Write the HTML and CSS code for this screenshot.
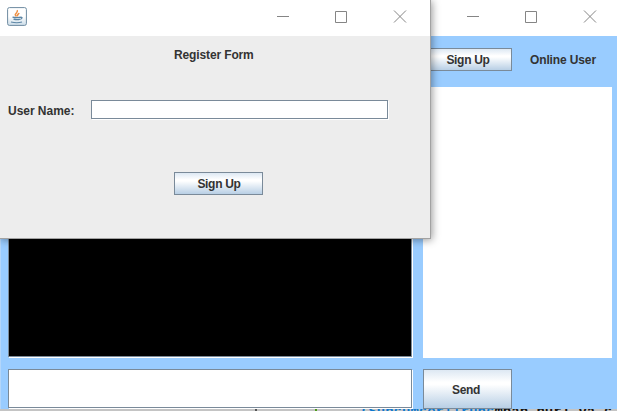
FILE: index.html
```html
<!DOCTYPE html>
<html lang="en">
<head>
<meta charset="utf-8">
<title>Register Form</title>
<link rel="stylesheet" href="styles.css">
</head>
<body>
<main class="desktop">
  <section class="chat">
    <header class="titlebar">
      <svg class="controls" width="132" height="14" viewBox="0 0 132 14"><path d="M0 7.500h12M58.500 2.500h11v11h-11zM117 1.500l12 12M129 1.500l-12 12"/></svg>
    </header>
    <div class="chat-body">
      <div class="log"></div>
      <aside class="online">
        <div class="online-head"><button class="btn signup">Sign Up</button><span class="online-label">Online User</span></div>
        <div class="users"></div>
      </aside>
      <div class="field message"></div>
      <button class="btn send">Send</button>
    </div>
  </section>
  <footer class="editor"><span class="mark dark"></span><span class="mark green"></span><span class="code blue">(Sunsumser!!runs</span><span class="code">mnan nurl va s</span></footer>

  <section class="dialog">
    <header class="titlebar">
      <svg class="java" width="20" height="19" viewBox="0 0 20 19">
        <defs><linearGradient id="tile" x2="0" y2="1"><stop stop-color="#fff"/><stop offset=".5" stop-color="#fff"/><stop offset="1" stop-color="#cbdce8"/></linearGradient></defs>
        <rect x=".6" y=".6" width="18.800" height="17.800" rx="1.800" fill="url(#tile)" stroke="#6e8ba1"/>
        <path d="M9.500 9.300C5.800 6.900 11.600 6 10.200 3.200M10.600 9.300C9.600 7.700 11.700 7.200 12 6" fill="none" stroke="#ef9145" stroke-width="1.500"/>
        <path d="M5.500 10.200q4.500 1 8.500 0M6.500 12.200q3.500 1 6.500 0M4 15q6 1.500 11 0M14 10.200q2.500.3-.6 2.200" fill="none" stroke="#5d86a5" stroke-width="1.200"/>
      </svg>
      <svg class="controls" width="132" height="14" viewBox="0 0 132 14"><path d="M0 7.500h12M58.500 2.500h11v11h-11zM117 1.500l12 12M129 1.500l-12 12"/></svg>
    </header>
    <div class="form">
      <h1 class="heading">Register Form</h1>
      <div class="row"><label class="label">User Name:</label><div class="field name"></div></div>
      <button class="btn submit">Sign Up</button>
    </div>
  </section>
</main>
</body>
</html>
```
FILE: styles.css
```css
* { box-sizing: border-box; }
body {
  margin: 0;
  font: bold 12px/14px "Liberation Sans", Arial, sans-serif;
  letter-spacing: -0.13px;
  color: #333;
}
.desktop { position: relative; width: 617px; height: 411px; overflow: hidden; }
.chat { height: 409px; background: #9cf; }
.titlebar {
  display: flex;
  align-items: flex-start;
  justify-content: flex-end;
  height: 36px;
  padding-top: 9px;
  background: #fff;
}
.chat .titlebar { padding-right: 18px; }
.controls path { fill: none; stroke: #858585; stroke-width: 1; }
.chat-body {
  display: grid;
  grid-template-columns: 405px 189px;
  grid-template-rows: 310px 40px;
  column-gap: 10px;
  row-gap: 11px;
  padding: 12px 5px 0 7px;
  border-left: 1px solid #b3d6fa;
}
.log {
  margin: 0 1px 1px 0;
  background: #000;
  border: 1px solid #7a8a99;
  box-shadow: 1px 1px #fff;
}
.online { display: flex; flex-direction: column; }
.online-head { display: flex; align-items: flex-start; height: 39px; }
.users { flex: 1; background: #fff; }
.btn {
  display: block;
  margin: 0;
  padding: 0;
  border: 1px solid #7a8a99;
  background: linear-gradient(#dde8f3 0%, #fff 32%, #fff 38%, #b8cfe5 100%);
  color: #333;
  font: inherit;
  letter-spacing: -0.3px;
  text-align: center;
}
.signup { width: 89px; height: 23px; padding-left: 1px; }
.online-label { margin: 5px 0 0 18px; white-space: nowrap; }
.send { width: 89px; height: 40px; padding: 2px 3px 0 0; }
.field {
  background: #fff;
  border: 1px solid #7a8a99;
  box-shadow: 1px 1px #fff;
}
.message { width: 404px; height: 39px; }
.editor { display: flex; height: 2px; background: #c4c4c4; overflow: hidden; }
.mark { width: 2px; height: 2px; margin-left: 255px; background: #555; }
.mark.green { margin-left: 58px; background: #4c9a18; }
.code {
  margin-top: -4px;
  font: bold 14px/14px "Liberation Mono", monospace;
  letter-spacing: 0;
  white-space: pre;
  color: #111;
}
.code.blue { color: #0b78cf; margin-left: 43px; }
.dialog {
  position: absolute;
  left: 0;
  top: 0;
  width: 431px;
  height: 239px;
  background: #ededed;
  border: solid #a2a2a2;
  border-width: 0 1px 1px 0;
  box-shadow: 1px 1px 8px rgba(0, 0, 0, .42);
}
.dialog .titlebar { padding-right: 21px; }
.java { margin: -2px auto 0 7px; }
.form { padding-top: 12px; }
.heading { margin: 0 0 0 174px; font: inherit; }
.row { display: flex; margin-top: 38px; padding-left: 8px; }
.label { width: 83px; padding-top: 4px; letter-spacing: -0.03px; }
.name { width: 297px; height: 19px; }
.submit { width: 89px; height: 23px; margin: 53px 0 0 174px; padding-left: 1px; }
```
